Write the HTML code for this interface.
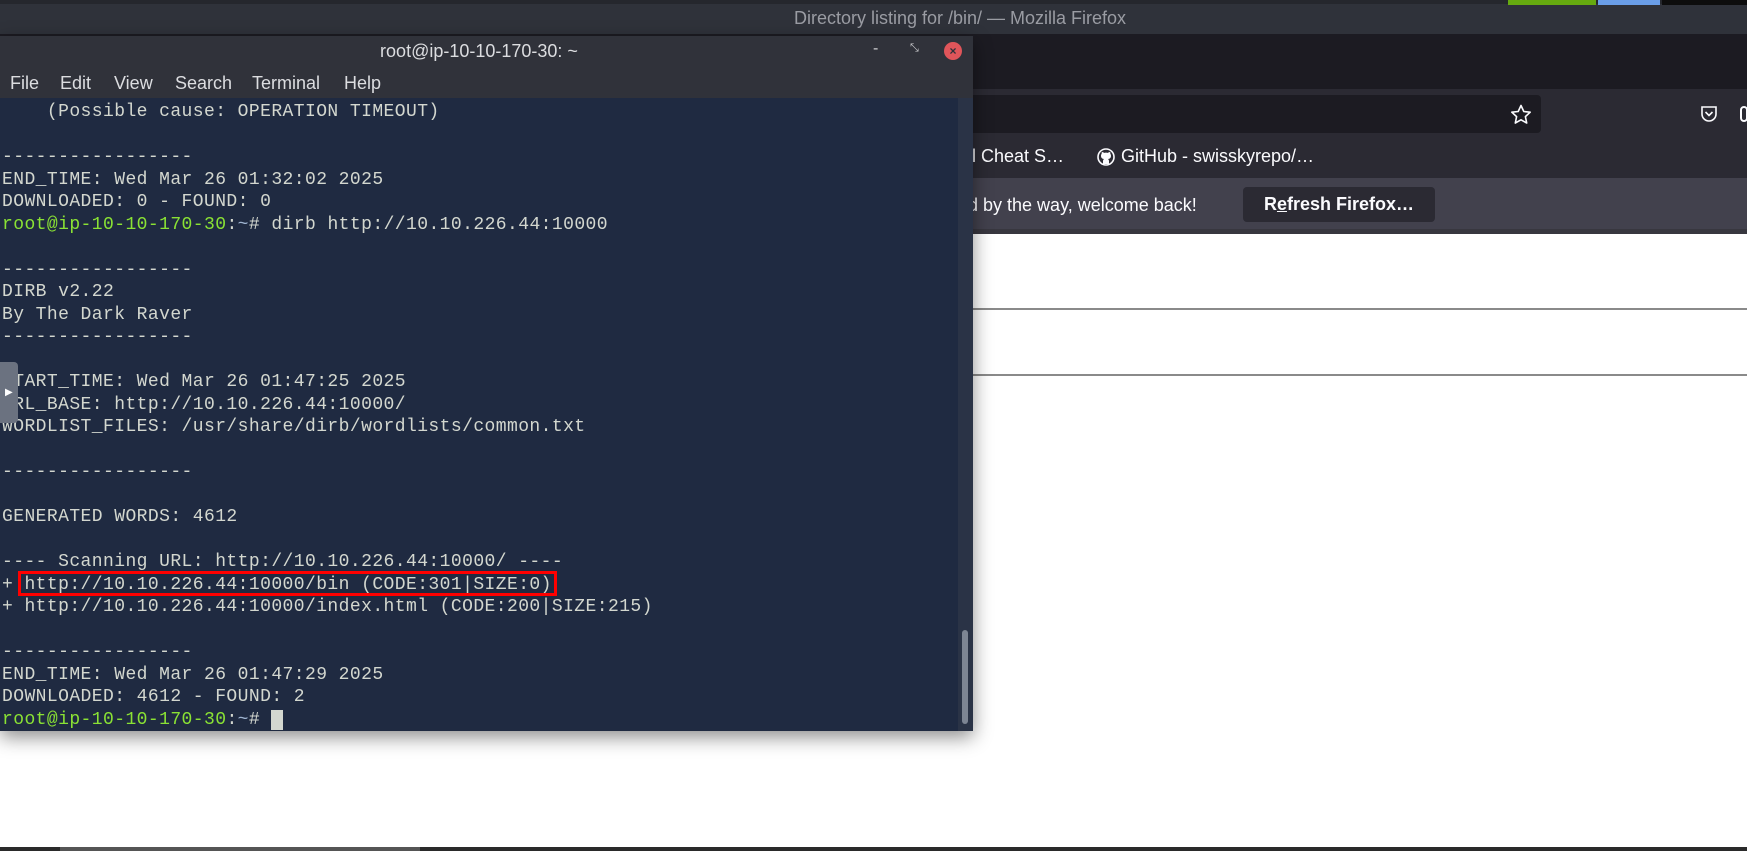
<!DOCTYPE html>
<html><head><meta charset="utf-8"><style>
*{margin:0;padding:0;box-sizing:border-box}
body{width:1747px;height:851px;overflow:hidden;background:#fff;position:relative;font-family:"Liberation Sans",sans-serif}
.abs{position:absolute}
.term{left:0;top:36px;width:973px;height:695px;background:#1f2a41;box-shadow:0 6px 18px rgba(0,0,0,.45)}
.lines{position:absolute;left:2px;top:101px;font-family:"Liberation Mono",monospace;font-size:18px;letter-spacing:0.42px;line-height:22.5px;color:#d3d7cf;white-space:pre}
.g{color:#8ae234}.b{color:#9fb4d0}
.m{position:absolute;top:37px;color:#dcdde0;font-size:18px}
</style></head><body>
<div class="abs" style="left:0;top:0;width:1747px;height:34px;background:#2f323a"></div>
<div class="abs" style="left:0;top:0;width:1747px;height:4px;background:#25272d"></div>
<div class="abs" style="left:1508px;top:0;width:88px;height:5px;background:#66aa10"></div>
<div class="abs" style="left:1598px;top:0;width:62px;height:5px;background:#6a9ee8"></div>
<div class="abs" style="left:1662px;top:0;width:85px;height:5px;background:#0d0d0d"></div>
<div class="abs" style="left:660px;top:8px;width:600px;text-align:center;color:#9a9ca3;font-size:18px">Directory listing for /bin/ — Mozilla Firefox</div>
<div class="abs" style="left:0;top:34px;width:1747px;height:55px;background:#1c1b22"></div>
<div class="abs" style="left:0;top:89px;width:1747px;height:47px;background:#2b2a33"></div>
<div class="abs" style="left:960px;top:95px;width:581px;height:38px;background:#1c1b22;border-radius:4px"></div>
<svg class="abs" style="left:1509px;top:103px" width="24" height="24" viewBox="0 0 24 24"><path d="M12 2.5l2.8 6 6.4.7-4.8 4.4 1.3 6.4L12 16.8 6.3 20l1.3-6.4-4.8-4.4 6.4-.7z" fill="none" stroke="#fbfbfe" stroke-width="1.6" stroke-linejoin="round"/></svg>
<svg class="abs" style="left:1698px;top:103px" width="22" height="22" viewBox="0 0 22 22"><path d="M4 4h14v7a7 7 0 0 1-14 0z" fill="none" stroke="#fbfbfe" stroke-width="1.6"/><path d="M7.5 9l3.5 3.5L14.5 9" fill="none" stroke="#fbfbfe" stroke-width="1.6"/></svg>
<div class="abs" style="left:1740px;top:106px;width:8px;height:16px;border:2px solid #fbfbfe;border-radius:8px"></div>
<div class="abs" style="left:0;top:136px;width:1747px;height:42px;background:#2b2a33"></div>
<div class="abs" style="left:958px;top:146px;color:#fbfbfe;font-size:18px">ell Cheat S…</div>
<svg class="abs" style="left:1097px;top:148px" width="18" height="18" viewBox="0 0 18 18"><circle cx="9" cy="9" r="8" fill="none" stroke="#fbfbfe" stroke-width="1.6"/><path d="M6 16v-3c0-1 .5-1.5 1-2-2-.3-3-1.3-3-3.3 0-.8.3-1.4.7-1.9-.1-.5-.1-1.2.2-1.8 1 0 1.7.5 2.2.9a6 6 0 0 1 3.8 0c.5-.4 1.2-.9 2.2-.9.3.6.3 1.3.2 1.8.4.5.7 1.1.7 1.9 0 2-1 3-3 3.3.5.5 1 1 1 2v3z" fill="#fbfbfe"/></svg>
<div class="abs" style="left:1121px;top:146px;color:#fbfbfe;font-size:18px">GitHub - swisskyrepo/…</div>
<div class="abs" style="left:0;top:178px;width:1747px;height:51px;background:#42414d"></div>
<div class="abs" style="left:0;top:229px;width:1747px;height:5px;background:#38373f"></div>
<div class="abs" style="left:958px;top:195px;color:#fbfbfe;font-size:18px">nd by the way, welcome back!</div>
<div class="abs" style="left:1243px;top:187px;width:192px;height:35px;background:#2b2a33;border-radius:4px;color:#fbfbfe;font-size:18px;font-weight:bold;text-align:center;line-height:35px">R<u>e</u>fresh Firefox…</div>
<div class="abs" style="left:960px;top:308px;width:787px;height:2px;background:#8a8a8a"></div>
<div class="abs" style="left:960px;top:374px;width:787px;height:2px;background:#8a8a8a"></div>
<div class="abs" style="left:0;top:847px;width:1747px;height:4px;background:#2a2a2a"></div>
<div class="abs" style="left:60px;top:847px;width:360px;height:4px;background:#555"></div>
<div class="abs term">
  <div class="abs" style="left:0;top:0;width:973px;height:62px;background:#30323a"></div>
  <div class="abs" style="left:0;top:5px;width:958px;text-align:center;color:#dcdde0;font-size:18px">root@ip-10-10-170-30: ~</div>
  <div class="abs" style="left:873px;top:4px;color:#cfd0d3;font-size:16px">-</div>
  <div class="abs" style="left:910px;top:6px;color:#cfd0d3;font-size:11px">⤡</div>
  <div class="abs" style="left:944px;top:6px;width:18px;height:18px;border-radius:50%;background:#e0555a;color:#2f313a;font-size:12px;text-align:center;line-height:18px;font-weight:bold">×</div>
  <div class="m" style="left:10px">File</div>
  <div class="m" style="left:60px">Edit</div>
  <div class="m" style="left:114px">View</div>
  <div class="m" style="left:175px">Search</div>
  <div class="m" style="left:252px">Terminal</div>
  <div class="m" style="left:344px">Help</div>
  <div class="abs" style="left:958px;top:62px;width:15px;height:633px;background:#2a3346"></div>
  <div class="abs" style="left:962px;top:594px;width:6px;height:94px;background:#7d8593;border-radius:3px"></div>
</div>
<div class="lines">    (Possible cause: OPERATION TIMEOUT)

-----------------
END_TIME: Wed Mar 26 01:32:02 2025
DOWNLOADED: 0 - FOUND: 0
<span class="g">root@ip-10-10-170-30</span>:<span class="b">~</span># dirb http://10.10.226.44:10000

-----------------
DIRB v2.22
By The Dark Raver
-----------------

START_TIME: Wed Mar 26 01:47:25 2025
URL_BASE: http://10.10.226.44:10000/
WORDLIST_FILES: /usr/share/dirb/wordlists/common.txt

-----------------

GENERATED WORDS: 4612

---- Scanning URL: http://10.10.226.44:10000/ ----
+ http://10.10.226.44:10000/bin (CODE:301|SIZE:0)
+ http://10.10.226.44:10000/index.html (CODE:200|SIZE:215)

-----------------
END_TIME: Wed Mar 26 01:47:29 2025
DOWNLOADED: 4612 - FOUND: 2
<span class="g">root@ip-10-10-170-30</span>:<span class="b">~</span># <span style="background:#d3d7cf"> </span></div>
<div class="abs" style="left:18px;top:571px;width:539px;height:25px;border:3px solid #ff0000"></div>
<div class="abs" style="left:0;top:362px;width:18px;height:61px;background:#6b7280;border-radius:0 4px 4px 0"></div>
<div class="abs" style="left:5px;top:387px;color:#fff;font-size:10px">▶</div>
</body></html>
